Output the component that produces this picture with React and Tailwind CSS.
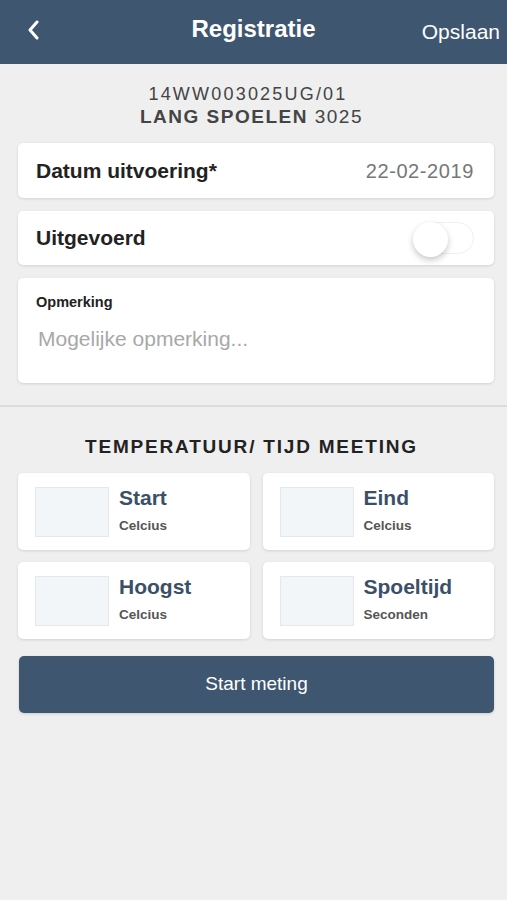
import React, { useState } from 'react';

const font = { fontFamily: '"Liberation Sans", Arial, sans-serif' };

function Meting({ label, unit }) {
  return (
    <div className="flex h-[77px] items-center rounded-[5px] bg-white pl-[17px] shadow-[0_1px_3px_rgba(0,0,0,0.12)]">
      <div className="h-[50px] w-[74px] border border-[#e6e9ec] bg-[#f3f6f8]" />
      <div className="ml-[10px] flex flex-col">
        <span className="mt-[-4px] text-[21px] font-bold leading-[24px] text-[#3a5069]">{label}</span>
        <span className="mt-[8px] text-[13.5px] font-bold leading-[16px] text-[#555]">{unit}</span>
      </div>
    </div>
  );
}

export default function App() {
  const [uitgevoerd, setUitgevoerd] = useState(false);

  return (
    <div className="min-h-[900px] bg-[#efefef]" style={font}>
      {/* header */}
      <header className="relative flex h-[64px] items-center justify-center bg-[#3e5670]">
        <button className="absolute left-[24px] top-[18px] p-[2px]">
          <svg width="14" height="20" viewBox="0 0 14 20" fill="none">
            <path d="M11 2 L4 10 L11 18" stroke="white" strokeWidth="3" strokeLinecap="round" strokeLinejoin="round" />
          </svg>
        </button>
        <h1 className="mt-[-6px] text-[24px] font-bold text-white">Registratie</h1>
        <span className="absolute right-[7px] top-[16px] text-[21px] text-white">Opslaan</span>
      </header>

      <div className="pl-[18px] pr-[13px]">
        <div className="flex flex-col items-center pt-[19px] text-[#444]">
          <div className="mr-[16px] text-[18px] leading-[22px] tracking-[2.2px]">14WW003025UG/01</div>
          <div className="mr-[9px] mt-[1px] text-[19px] leading-[22px] tracking-[1.5px]">
            <span className="font-bold">LANG SPOELEN</span> 3025
          </div>
        </div>

        <div className="mt-[15px] flex h-[55px] items-center justify-between rounded-[5px] bg-white px-[18px] shadow-[0_1px_3px_rgba(0,0,0,0.12)]">
          <span className="text-[21px] font-bold text-[#222]">Datum uitvoering*</span>
          <span className="mr-[2px] text-[20px] tracking-[0.6px] text-[#777]">22-02-2019</span>
        </div>

        <div className="mt-[13px] flex h-[54px] items-center justify-between rounded-[5px] bg-white pl-[18px] pr-[20px] shadow-[0_1px_3px_rgba(0,0,0,0.12)]">
          <span className="text-[21px] font-bold text-[#222]">Uitgevoerd</span>
          <button
            onClick={() => setUitgevoerd(!uitgevoerd)}
            className="relative h-[32px] w-[60px] rounded-full border border-[#f0f0f0] bg-white"
          >
            <span className="absolute left-[-2px] top-[-1px] h-[35px] w-[35px] rounded-full bg-white shadow-[0_3px_6px_rgba(0,0,0,0.22)]" />
          </button>
        </div>

        <div className="mt-[13px] h-[105px] rounded-[5px] bg-white px-[18px] pt-[14px] shadow-[0_1px_3px_rgba(0,0,0,0.12)]">
          <div className="text-[14.5px] font-bold text-[#222]">Opmerking</div>
          <div className="mt-[9px] pl-[2px] text-[21px] text-[#a8a8a8]">Mogelijke opmerking...</div>
        </div>
      </div>

      <div className="mt-[22px] h-[2px] bg-[#dcdcdc]" />

      <div className="pl-[18px] pr-[13px]">
        <h2 className="mr-[9px] mt-[29px] text-center text-[19px] font-bold leading-[22px] tracking-[1.8px] text-[#222]">
          TEMPERATUUR/ TIJD MEETING
        </h2>

        <div className="mt-[15px] grid grid-cols-2 gap-x-[13px] gap-y-[12px]">
          <Meting label="Start" unit="Celcius" />
          <Meting label="Eind" unit="Celcius" />
          <Meting label="Hoogst" unit="Celcius" />
          <Meting label="Spoeltijd" unit="Seconden" />
        </div>

        <button className="ml-[1px] mt-[17px] flex h-[57px] w-[calc(100%-1px)] items-center justify-center rounded-[5px] bg-[#3e5670] text-[19px] text-white shadow-[0_1px_3px_rgba(0,0,0,0.15)]">
          Start meting
        </button>
      </div>
    </div>
  );
}
